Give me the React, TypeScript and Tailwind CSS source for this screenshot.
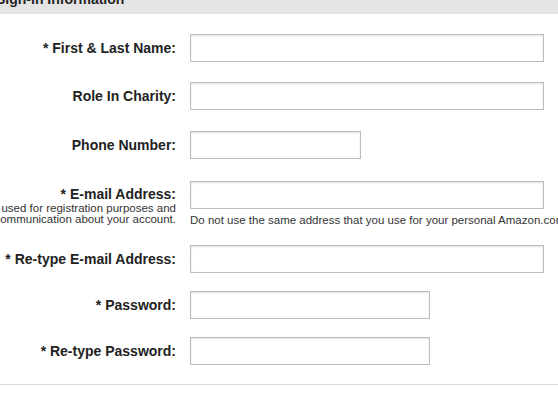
import React from "react";

function Field({
  label,
  width,
  top,
}: {
  label: string;
  width: string;
  top: string;
}) {
  return (
    <div className={`flex items-center ${top}`}>
      <div className="flex w-[176px] shrink-0 justify-end whitespace-nowrap text-[14px] font-bold text-[#222]">
        {label}
      </div>
      <input
        type="text"
        className={`ml-[14px] h-[28px] ${width} border border-[#bcbcbc] bg-white shadow-[inset_0_1px_2px_rgba(0,0,0,0.12)] outline-none`}
      />
    </div>
  );
}

export default function App() {
  return (
    <div
      className="h-[402px] w-[558px] overflow-hidden bg-white"
      style={{ fontFamily: '"Liberation Sans", Arial, sans-serif' }}
    >
      {/* section header, top cut off */}
      <div className="h-[14px] overflow-hidden bg-[#e4e4e4]">
        <div className="-ml-[4px] -mt-[9px] text-[14px] font-bold leading-[16px] text-[#222]">
          Sign-in Information
        </div>
      </div>

      <div className="pt-[20px]">
        <Field label="* First & Last Name:" width="w-[354px]" top="" />
        <Field label="Role In Charity:" width="w-[354px]" top="mt-[20px]" />
        <Field label="Phone Number:" width="w-[171px]" top="mt-[21px]" />

        {/* e-mail row with notes */}
        <div className="mt-[22px] flex items-start">
          <div className="flex w-[176px] shrink-0 flex-col items-end whitespace-nowrap">
            <div className="pt-[5px] text-[14px] font-bold leading-[16px] text-[#222]">
              * E-mail Address:
            </div>
            <div className="mt-[1px] text-[11.5px] leading-[11px] text-[#333]">
              used for registration purposes and
            </div>
            <div className="text-[11.5px] leading-[11px] text-[#333]">
              communication about your account.
            </div>
          </div>
          <div className="ml-[14px] flex flex-col whitespace-nowrap">
            <input
              type="text"
              className="h-[28px] w-[354px] border border-[#bcbcbc] bg-white shadow-[inset_0_1px_2px_rgba(0,0,0,0.12)] outline-none"
            />
            <div className="mt-[6px] text-[11.5px] leading-[11px] text-[#333]">
              Do not use the same address that you use for your personal Amazon.com account.
            </div>
          </div>
        </div>

        <Field label="* Re-type E-mail Address:" width="w-[354px]" top="mt-[19px]" />
        <Field label="* Password:" width="w-[240px]" top="mt-[18px]" />
        <Field label="* Re-type Password:" width="w-[240px]" top="mt-[18px]" />
      </div>

      <div className="mt-[19px] border-t border-[#dddddd]" />
    </div>
  );
}
